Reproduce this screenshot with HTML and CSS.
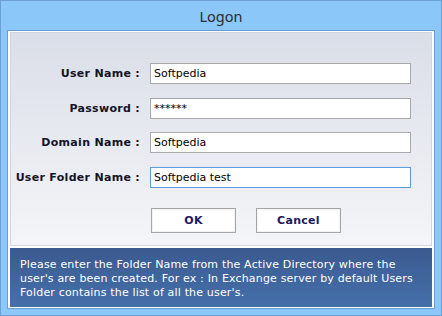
FILE: index.html
```html
<!DOCTYPE html>
<html lang="en">
<head>
  <meta charset="UTF-8">
  <title>Logon</title>
  <link rel="stylesheet" href="styles.css">
</head>
<body>

<div class="window">
  <div class="titlebar">Logon</div>

  <div class="client">
    <!-- Logon form -->
    <form class="logon">
      <label for="user-name">User Name :</label>
      <input type="text" id="user-name" value="Softpedia">

      <label for="password">Password :</label>
      <input type="text" id="password" value="******">

      <label for="domain-name">Domain Name :</label>
      <input type="text" id="domain-name" value="Softpedia">

      <label for="folder-name">User Folder Name :</label>
      <input type="text" id="folder-name" class="active" value="Softpedia test">

      <div class="actions">
        <button type="button">OK</button>
        <button type="button">Cancel</button>
      </div>
    </form>

    <!-- Help text -->
    <div class="hint">
      Please enter the Folder Name from the Active Directory where the<br>
      user's are been created. For ex : In Exchange server by default Users<br>
      Folder contains the list of all the user's.
    </div>
  </div>
</div>

</body>
</html>
```

FILE: styles.css
```css
* { margin: 0; padding: 0; box-sizing: border-box; }
body { background: #8bc7f9; font-family: "DejaVu Sans", Verdana, sans-serif; font-size: 11px; }
.window { width: 442px; height: 316px; border: 1px solid #6e9fd2; background: #8bc7f9; padding: 0 6px 6px; display: flex; flex-direction: column; }
.titlebar { height: 29px; text-align: center; font-family: "Noto Sans", sans-serif; font-size: 14.5px; line-height: 31px; color: #2b2b2b; }
.client { flex: 1; border: 1px solid #6b9dd0; background: #fff; padding: 1px 2px; display: flex; flex-direction: column; gap: 2px; }
.logon { flex: 1; border: 1px solid #d3d6dd; background: linear-gradient(#dadee8, #f4f5f8); display: grid; grid-template-columns: 129px 261px; column-gap: 10px; row-gap: 13.5px; align-content: start; padding-top: 30px; }
.logon label { text-align: right; font-weight: bold; letter-spacing: 0.3px; color: #141428; align-self: center; }
.logon input { height: 21px; border: 1px solid #a9a9a9; background: #fff; font: 11px "DejaVu Sans", Verdana, sans-serif; color: #000; padding: 0 3px; outline: none; }
.logon input.active { border-color: #5a9be2; }
.actions { grid-column: 2; display: flex; gap: 20px; margin-top: 6.5px; padding-left: 1px; }
.actions button { width: 85px; height: 25px; border: 1px solid #a6a6a6; background: #fff; box-shadow: inset 0 0 0 1px #f2f2f2; font: bold 11px "DejaVu Sans", Verdana, sans-serif; letter-spacing: 0.3px; color: #1b1b5e; cursor: pointer; }
.hint { height: 59px; background: linear-gradient(#3a5a8f, #4670ab); color: #fff; padding: 10px 10px 0; line-height: 14px; letter-spacing: 0.17px; white-space: nowrap; }
```
